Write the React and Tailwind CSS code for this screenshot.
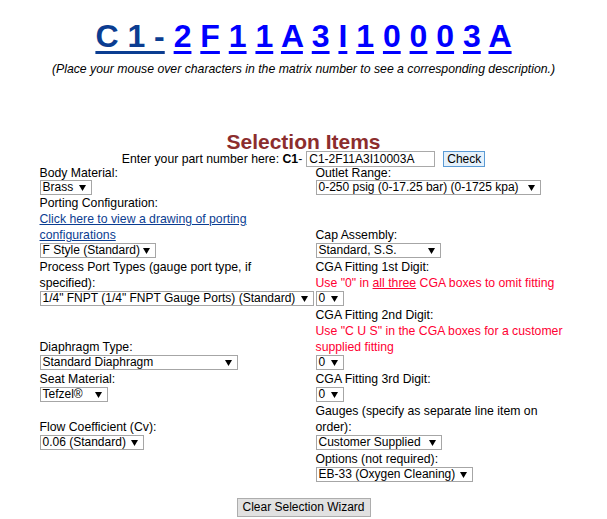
import React from 'react';

const matrix = ['2', 'F', '1', '1', 'A', '3', 'I', '1', '0', '0', '0', '3', 'A'];

function FakeSelect({ value, width, flush }) {
  return (
    <div
      className={`relative flex h-[15px] items-center border border-[#a6a6a6] bg-white pl-[2px] text-[12px] leading-[13px] whitespace-nowrap ${flush ? '' : 'mb-[1px]'}`}
      style={{ width }}
    >
      <span>{value}</span>
      <svg
        className="absolute right-[5px] top-[4px]"
        width="7"
        height="6"
        viewBox="0 0 7 6"
      >
        <polygon points="0,0 7,0 3.5,6" fill="#000" />
      </svg>
    </div>
  );
}

function Field({ label, children, value, width, textWidth, compact }) {
  return (
    <div>
      <div
        className={compact ? 'h-[13px] leading-[13px]' : 'leading-[16px]'}
        style={{ maxWidth: textWidth }}
      >
        {label}
      </div>
      {children}
      <FakeSelect value={value} width={width} flush={compact} />
    </div>
  );
}

const Red = ({ children }) => (
  <div className="leading-[16px] text-[#ff0033]">{children}</div>
);

export default function App() {
  return (
    <div className="min-h-[519px] bg-white pt-[18px] font-['Liberation_Sans',Arial,sans-serif] text-[12.25px] text-black">
      {/* Part number matrix */}
      <div className="text-center text-[32px] font-bold leading-[36px] whitespace-nowrap">
        <a className="text-[#0b3d91] underline decoration-[3px] underline-offset-[4px]">C 1 -</a>
        {matrix.map((ch, i) => (
          <React.Fragment key={i}>
            {' '}
            <a className="text-[#0000ff] underline decoration-[3px] underline-offset-[4px]">{ch}</a>
          </React.Fragment>
        ))}
      </div>
      <p className="mt-[7px] text-center italic leading-[16px]">
        (Place your mouse over characters in the matrix number to see a corresponding description.)
      </p>

      <h2 className="mt-[53px] text-center text-[21px] font-bold leading-[24px] text-[#8c2d2d]">
        Selection Items
      </h2>

      {/* Part number entry */}
      <div className="-mt-[3px] flex h-[16px] items-center justify-center leading-[16px]">
        <span>
          Enter your part number here: <b>C1</b>-
        </span>
        <div className="ml-[4px] flex h-[16px] w-[129px] items-center border border-[#a9a9a9] bg-white pl-[2px] text-[12px] leading-[12px]">
          C1-2F11A3I10003A
        </div>
        <button className="ml-[8px] h-[16px] w-[42px] border border-[#5b9bd5] bg-[#e5f1fb] text-[12px] leading-[12px]">
          Check
        </button>
      </div>

      {/* Selection grid */}
      <div className="mx-auto grid w-[528px] grid-cols-[276px_252px] items-end">
        <Field label="Body Material:" value="Brass" width={52} compact />
        <Field label="Outlet Range:" value="0-250 psig (0-17.25 bar) (0-1725 kpa)" width={225} compact />

        <Field label="Porting Configuration:" value="F Style (Standard)" width={116} textWidth={250}>
          <div className="leading-[16px]" style={{ maxWidth: 250 }}>
            <a className="text-[#0b3d91] underline">Click here to view a drawing of porting configurations</a>
          </div>
        </Field>
        <Field label="Cap Assembly:" value="Standard, S.S." width={125} />

        <Field
          label="Process Port Types (gauge port type, if specified):"
          value={'1/4" FNPT (1/4" FNPT Gauge Ports) (Standard)'}
          width={274}
          textWidth={250}
        />
        <Field label="CGA Fitting 1st Digit:" value="0" width={28}>
          <Red>
            Use "0" in <u>all three</u> CGA boxes to omit fitting
          </Red>
        </Field>

        <Field label="Diaphragm Type:" value="Standard Diaphragm" width={198} />
        <Field label="CGA Fitting 2nd Digit:" value="0" width={28} textWidth={248}>
          <div style={{ maxWidth: 248 }}>
            <Red>Use "C U S" in the CGA boxes for a customer supplied fitting</Red>
          </div>
        </Field>

        <Field label="Seat Material:" value="Tefzel®" width={68} />
        <Field label="CGA Fitting 3rd Digit:" value="0" width={28} />

        <Field label="Flow Coefficient (Cv):" value="0.06 (Standard)" width={104} />
        <Field
          label="Gauges (specify as separate line item on order):"
          value="Customer Supplied"
          width={126}
          textWidth={248}
        />

        <div />
        <Field label="Options (not required):" value="EB-33 (Oxygen Cleaning)" width={157} />
      </div>

      <div className="mt-[15px] flex justify-center">
        <button className="h-[19px] w-[134px] border border-[#adadad] bg-[#e1e1e1] text-[12px] leading-[17px]">
          Clear Selection Wizard
        </button>
      </div>
    </div>
  );
}
